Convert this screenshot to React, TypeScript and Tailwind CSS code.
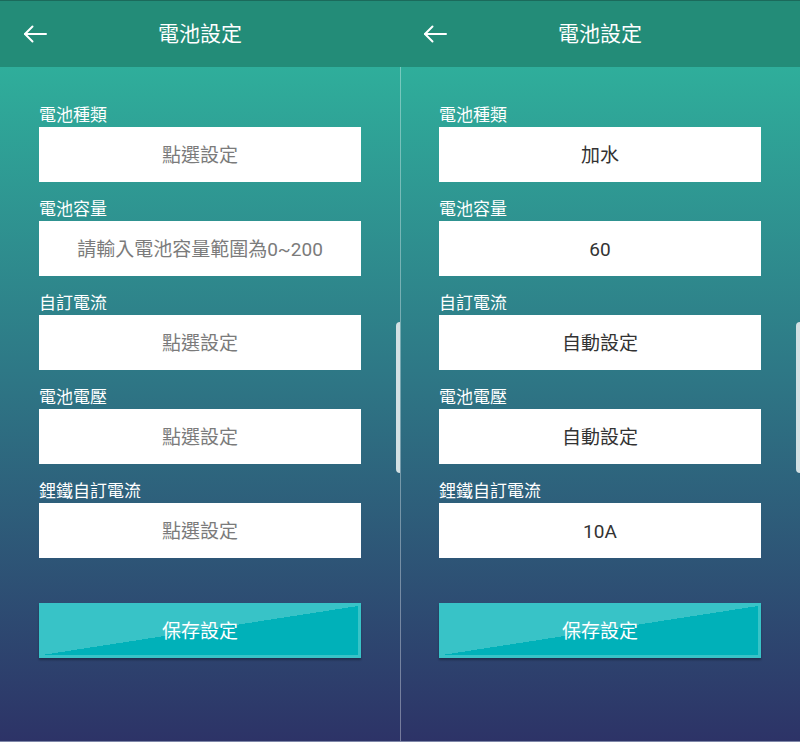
import React from "react";

type Field = { label: string; value: string; placeholder?: boolean };

const FONT = "font-['Roboto','Noto_Sans_CJK_TC',sans-serif]";

const emptyFields: Field[] = [
  { label: "電池種類", value: "點選設定", placeholder: true },
  { label: "電池容量", value: "請輸入電池容量範圍為0~200", placeholder: true },
  { label: "自訂電流", value: "點選設定", placeholder: true },
  { label: "電池電壓", value: "點選設定", placeholder: true },
  { label: "鋰鐵自訂電流", value: "點選設定", placeholder: true },
];

const filledFields: Field[] = [
  { label: "電池種類", value: "加水" },
  { label: "電池容量", value: "60" },
  { label: "自訂電流", value: "自動設定" },
  { label: "電池電壓", value: "自動設定" },
  { label: "鋰鐵自訂電流", value: "10A" },
];

function BackArrow() {
  return (
    <svg width="24" height="18" viewBox="0 0 24 18" fill="none" aria-hidden>
      <path d="M2 9H23" stroke="white" strokeWidth="2" strokeLinecap="round" />
      <path d="M9.5 1.5L2 9l7.5 7.5" stroke="white" strokeWidth="2" strokeLinecap="round" strokeLinejoin="round" />
    </svg>
  );
}

function Screen({ fields }: { fields: Field[] }) {
  return (
    <div className="relative flex h-full w-[400px] flex-col">
      <div className="flex h-[67px] shrink-0 items-center border-t border-[#1b6a5b] bg-[#238c78] px-[23px]">
        <BackArrow />
        <div className="flex-1 pr-[24px] pt-[2px] text-center text-[21px] text-white">電池設定</div>
      </div>

      <div className="flex flex-1 flex-col px-[39px] pt-[36px]">
        <div className="flex flex-col gap-[15px]">
          {fields.map((f) => (
            <div key={f.label} className="flex flex-col gap-[2px]">
              <div className="h-[22px] pt-[1px] text-[17px] leading-[22px] text-white">{f.label}</div>
              <div
                className={[
                  "flex h-[55px] items-center justify-center bg-white pt-[3px] text-[19px]",
                  f.placeholder ? "text-[#7b7b7b]" : "text-[#333333]",
                ].join(" ")}
              >
                {f.value}
              </div>
            </div>
          ))}
        </div>

        <button
          type="button"
          className="mt-[45px] flex h-[55px] items-center justify-center border-[3px] border-[#38c3c7] bg-[linear-gradient(to_bottom_right,#38c3c7_50%,#00b1b9_50%)] pt-[3px] text-[19px] text-white shadow-[0_2px_2px_rgba(0,0,0,0.3)]"
        >
          保存設定
        </button>
      </div>

      <div className="absolute right-0 top-[322px] h-[151px] w-[4px] rounded-l-full bg-[#d3e0e3]" />
    </div>
  );
}

export default function App() {
  return (
    <div
      className={`${FONT} flex h-[742px] w-[800px] overflow-hidden border-b border-[#7e86a8] bg-[linear-gradient(to_bottom,#238c78_0px,#238c78_67px,#2fae9b_67px,#2e7886_50%,#2d3367_100%)]`}
    >
      <Screen fields={emptyFields} />
      <div className="w-px shrink-0 bg-white/35" />
      <div className="-ml-px flex">
        <Screen fields={filledFields} />
      </div>
    </div>
  );
}
